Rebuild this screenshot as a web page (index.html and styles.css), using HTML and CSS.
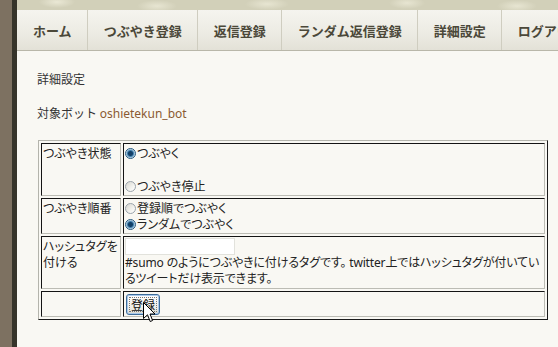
FILE: index.html
```html
<!DOCTYPE html>
<html lang="ja">
<head>
    <meta charset="UTF-8">
    <title>詳細設定</title>
    <link rel="stylesheet" href="styles.css">
</head>
<body>
    <div class="page">
        <!-- Left edge strips -->
        <div class="side-light"></div>
        <div class="side-dark"></div>

        <div class="main">
            <!-- Patterned header band -->
            <div class="band"></div>

            <!-- Menu -->
            <ul class="nav">
                <li><a href="#">ホーム</a></li>
                <li><a href="#">つぶやき登録</a></li>
                <li><a href="#">返信登録</a></li>
                <li><a href="#">ランダム返信登録</a></li>
                <li><a href="#">詳細設定</a></li>
                <li><a href="#">ログアウト</a></li>
            </ul>

            <!-- Content -->
            <div class="content">
                <p class="title">詳細設定</p>
                <p class="target">対象ボット <span class="bot-name">oshietekun_bot</span></p>

                <form>
                    <table class="settings">
                        <tr>
                            <td class="label">つぶやき状態</td>
                            <td class="value">
                                <label class="opt"><input type="radio" name="status" checked>つぶやく</label>
                                <div class="gap"></div>
                                <label class="opt"><input type="radio" name="status">つぶやき停止</label>
                            </td>
                        </tr>
                        <tr>
                            <td class="label">つぶやき順番</td>
                            <td class="value">
                                <label class="opt"><input type="radio" name="order">登録順でつぶやく</label>
                                <label class="opt"><input type="radio" name="order" checked>ランダムでつぶやく</label>
                            </td>
                        </tr>
                        <tr>
                            <td class="label">ハッシュタグを付ける</td>
                            <td class="value">
                                <input type="text" class="hashtag">
                                <p class="note">#sumo のようにつぶやきに付けるタグです。 twitter上ではハッシュタグが付いているツイートだけ表示できます。</p>
                            </td>
                        </tr>
                        <tr>
                            <td class="label"></td>
                            <td class="value">
                                <button type="button" class="submit">登録</button>
                            </td>
                        </tr>
                    </table>
                </form>
            </div>
        </div>

        <!-- Mouse pointer over the button -->
        <svg class="pointer" width="13" height="21" viewBox="0 0 13 21">
            <path d="M0.5 0.5 L0.5 16.5 L4.5 12.8 L7.2 19.5 L9.6 18.5 L7 12 L12 12 Z" fill="#fff" stroke="#000" stroke-width="1" stroke-linejoin="miter"/>
        </svg>
    </div>
</body>
</html>
```

FILE: styles.css
```css
* {
    margin: 0;
    padding: 0;
    box-sizing: border-box;
}

body {
    font-family: "Noto Sans CJK JP", sans-serif;
    font-size: 12px;
    color: #222;
    background: #f9f8f3;
    overflow: hidden;
}

.page {
    position: relative;
    display: flex;
    min-height: 347px;
}

.side-light {
    width: 12px;
    background: #7d7161;
}

.side-dark {
    width: 5px;
    background: #36342a;
}

.main {
    flex: 1;
    min-width: 0;
    background: #f9f8f3;
}

.band {
    height: 10px;
    background:
        radial-gradient(ellipse 18px 6px at 40px 2px, rgba(240, 238, 220, 0.8) 0%, transparent 100%),
        radial-gradient(ellipse 20px 6px at 140px 6px, rgba(240, 238, 220, 0.7) 0%, transparent 100%),
        radial-gradient(ellipse 22px 6px at 250px 4px, rgba(240, 238, 220, 0.7) 0%, transparent 100%),
        radial-gradient(ellipse 18px 6px at 390px 3px, rgba(240, 238, 220, 0.7) 0%, transparent 100%),
        radial-gradient(ellipse 20px 6px at 500px 6px, rgba(240, 238, 220, 0.7) 0%, transparent 100%),
        #d2d0b9;
}

.nav {
    list-style: none;
    display: flex;
    height: 41px;
    background: linear-gradient(#f5f4ef 0%, #ecebe3 60%, #e3e1d7 100%);
    border-bottom: 1px solid #b9b7a9;
    white-space: nowrap;
    overflow: hidden;
}

.nav li {
    display: flex;
    border-right: 1px solid #cfcdc0;
}

.nav a {
    display: flex;
    align-items: center;
    padding: 0 15px 0 16px;
    font-size: 13px;
    font-weight: bold;
    color: #4b4839;
    text-decoration: none;
    line-height: 1;
}

.content {
    padding: 20px 10px 0 20px;
}

.title {
    font-size: 12px;
    line-height: 16px;
    color: #333;
}

.target {
    margin-top: 18px;
    font-size: 12px;
    line-height: 16px;
    color: #333;
}

.bot-name {
    font-family: "Noto Sans", sans-serif;
    font-size: 12px;
    color: #8a5a32;
}

.settings {
    margin-top: 18px;
    margin-left: 1px;
    width: 510px;
    border-collapse: separate;
    border-spacing: 2px;
    border: 1px solid;
    border-color: #b4b4ac #1a1a1a #1a1a1a #b4b4ac;
    font-feature-settings: "palt";
}

.settings td {
    border: 1px solid;
    border-color: #141414 #bcbcb4 #bcbcb4 #141414;
    padding: 1px;
    vertical-align: top;
    line-height: 16px;
}

.settings .label {
    width: 80px;
}

.opt {
    display: flex;
    align-items: center;
    height: 16px;
}

.gap {
    height: 17px;
}

.opt input[type="radio"] {
    appearance: none;
    -webkit-appearance: none;
    width: 11px;
    height: 11px;
    margin: 0 1px 0 0;
    border-radius: 50%;
    border: 1px solid #9aa3ab;
    background: linear-gradient(135deg, #d6d6d0 0%, #f2f2ee 60%, #ffffff 100%);
    flex-shrink: 0;
}

.opt input[type="radio"]:checked {
    border-color: #24587f;
    background: radial-gradient(circle, #123f66 0 2px, #3f7fae 3px, #d5e4ee 4.5px, #ffffff 5.5px);
}

.hashtag {
    display: block;
    width: 110px;
    height: 17px;
    border: 1px solid #e2e2dc;
    background: #fff;
    font-size: 12px;
}

.note {
    font-family: "Noto Sans", "Noto Sans CJK JP", sans-serif;
    line-height: 16px;
    letter-spacing: -0.15px;
}

.submit {
    display: flex;
    align-items: center;
    justify-content: center;
    width: 34px;
    height: 21px;
    margin: 1px 0 0 1px;
    padding: 0;
    font-family: "Noto Sans CJK JP", sans-serif;
    font-size: 12px;
    line-height: 1;
    color: #111;
    border: 1px solid #3d6c99;
    border-radius: 3px;
    background: linear-gradient(#ffffff 0%, #eeede5 70%, #d8d6cc 100%);
    box-shadow: inset 0 0 0 1px #a8c8ea;
    outline: 1px dotted #777;
    outline-offset: -4px;
}

.pointer {
    position: absolute;
    left: 143px;
    top: 302px;
}
```
